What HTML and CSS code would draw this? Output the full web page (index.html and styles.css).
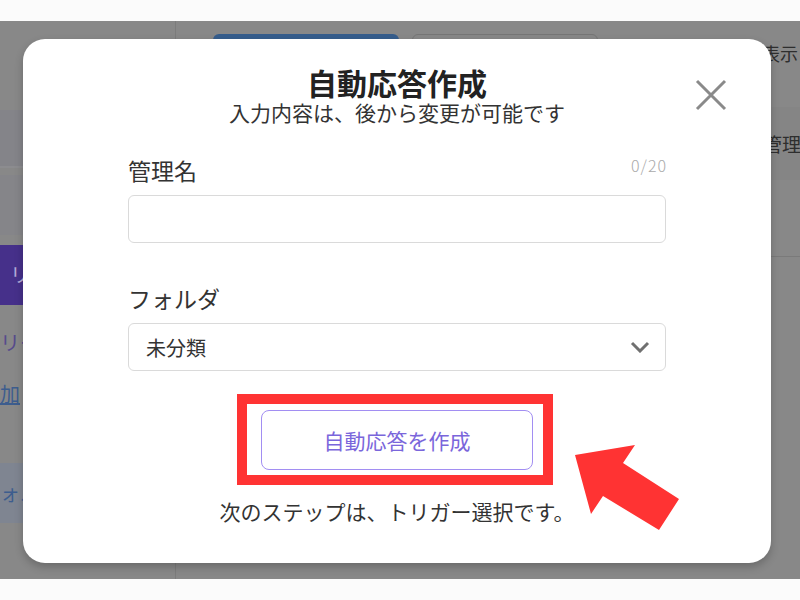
FILE: index.html
```html
<!DOCTYPE html>
<html lang="ja">
<head>
<meta charset="utf-8">
<title>自動応答作成</title>
<link rel="stylesheet" href="styles.css">
</head>
<body>
<div class="topbar"></div>
<div class="screen">
  <aside class="sidebar">
    <div class="side-head"></div>
    <div class="side-band"></div>
    <div class="side-band second"></div>
    <div class="side-item active">リッチメニュー</div>
    <div class="side-text">リーチ数</div>
    <a class="side-link">加</a>
    <div class="side-folder">ォルダ</div>
  </aside>
  <main class="main">
    <div class="toolbar">
      <span class="tb-btn primary"></span>
      <span class="tb-btn outline"></span>
      <span class="tb-label">非表示</span>
    </div>
    <div class="table-head"><span class="th">管理</span></div>
    <div class="table-row"></div>
  </main>

  <div class="modal" role="dialog">
    <div class="modal-header">
      <div class="titles">
        <h1 class="title">自動応答作成</h1>
        <p class="subtitle">入力内容は、後から変更が可能です</p>
      </div>
      <button class="close" aria-label="閉じる">
        <svg width="32" height="32" viewBox="0 0 32 32"><path d="M2 2 L30 30 M30 2 L2 30" stroke="#8a8a8a" stroke-width="3" stroke-linecap="butt" fill="none"/></svg>
      </button>
    </div>
    <div class="modal-body">
      <div class="field">
        <div class="label-row"><span class="label">管理名</span><span class="counter">0/20</span></div>
        <div class="input"></div>
      </div>
      <div class="field">
        <div class="label-row"><span class="label">フォルダ</span></div>
        <div class="select">
          <span>未分類</span>
          <svg width="20" height="12" viewBox="0 0 20 12"><path d="M2 2 L10 10 L18 2" stroke="#707070" stroke-width="3" fill="none"/></svg>
        </div>
      </div>
      <div class="highlight">
        <button class="create">自動応答を作成</button>
      </div>
      <p class="note">次のステップは、トリガー選択です。</p>
    </div>
    <svg class="arrow" width="120" height="100" viewBox="0 0 120 100"><polygon points="0,12 60,2 48,20 104,56 84,87 28,53 16,71" fill="#ff3333"/></svg>
  </div>
</div>
<div class="bottombar"></div>
</body>
</html>
```

FILE: styles.css
```css
* { box-sizing: border-box; }
html, body { margin: 0; padding: 0; }
body {
  width: 800px;
  height: 600px;
  overflow: hidden;
  background: #fbfbfb;
  font-family: "Noto Sans CJK JP", "Noto Sans", sans-serif;
  color: #333;
}
.topbar { height: 21px; background: #fbfbfb; }
.bottombar { height: 21px; background: #fbfbfb; }
.screen {
  position: relative;
  height: 558px;
  display: flex;
  background: #888888;
  overflow: hidden;
}
.sidebar {
  width: 176px;
  flex: none;
  border-right: 1px solid #7c7c7c;
  display: flex;
  flex-direction: column;
  white-space: nowrap;
  overflow: hidden;
}
.side-head { height: 89px; }
.side-band { height: 58px; background: #848489; border-bottom: 2px solid #8c8c8f; }
.side-band.second { height: 60px; margin-top: 7px; background: #858589; border: none; }
.side-item {
  height: 60px;
  margin-top: 10px;
  background: #46308a;
  color: #b4aad8;
  font-size: 20px;
  line-height: 60px;
  padding-left: 10px;
}
.side-text {
  margin-top: 26px;
  font-size: 20px;
  line-height: 24px;
  color: #574b8c;
}
.side-link {
  margin-top: 27px;
  font-size: 20px;
  line-height: 24px;
  color: #3d5d8e;
  text-decoration: underline;
}
.side-folder {
  margin-top: 57px;
  height: 60px;
  background: #7f8591;
  color: #3d5d8e;
  font-size: 20px;
  line-height: 60px;
}
.main {
  flex: 1;
  display: flex;
  flex-direction: column;
  white-space: nowrap;
  overflow: hidden;
}
.toolbar {
  display: flex;
  align-items: flex-start;
  gap: 13px;
  padding: 13px 0 0 37px;
  height: 86px;
}
.tb-btn { width: 186px; height: 38px; border-radius: 6px; }
.tb-btn.primary { background: #365d8c; }
.tb-btn.outline { border: 1px solid #767676; }
.tb-label {
  margin-left: 133px;
  font-size: 18px;
  line-height: 38px;
  color: #2e2e2e;
}
.table-head {
  height: 73px;
  background: #858585;
  padding-left: 587px;
  display: flex;
  align-items: center;
}
.th { font-size: 19px; color: #2e2e2e; }
.table-row { height: 77px; border-bottom: 1px solid #7a7a7a; }

/* modal */
.modal {
  position: absolute;
  left: 23px;
  top: 18px;
  width: 748px;
  height: 524px;
  background: #fff;
  border-radius: 22px;
  box-shadow: 0 4px 8px rgba(0,0,0,0.22);
  padding-top: 25px;
}
.modal-header {
  display: grid;
  grid-template-columns: 1fr auto 1fr;
  padding: 0 44px;
}
.titles { grid-column: 2; text-align: center; }
.title {
  margin: 0;
  font-size: 30px;
  line-height: 36px;
  font-weight: 700;
  color: #222;
}
.subtitle {
  margin: 0;
  font-size: 21px;
  line-height: 24px;
  color: #333;
}
.close {
  grid-column: 3;
  justify-self: end;
  margin-top: 15px;
  width: 32px;
  height: 32px;
  padding: 0;
  border: none;
  background: none;
}
.close svg { display: block; }
.modal-body {
  padding: 31px 105px 0;
  display: flex;
  flex-direction: column;
}
.field { display: flex; flex-direction: column; }
.field + .field { margin-top: 40px; }
.label-row {
  display: flex;
  justify-content: space-between;
  align-items: flex-start;
  height: 30px;
  margin-bottom: 10px;
}
.label { font-size: 23px; line-height: 30px; color: #333; }
.counter {
  font-size: 16px;
  line-height: 20px;
  letter-spacing: 1px;
  margin-right: -1px;
  color: #aaa;
  font-weight: 300;
}
.input, .select {
  height: 48px;
  border: 1px solid #dadada;
  border-radius: 6px;
  background: #fff;
}
.select {
  display: flex;
  align-items: center;
  justify-content: space-between;
  padding: 0 15px 0 17px;
  font-size: 20px;
  color: #333;
}
.select svg { display: block; }
.highlight {
  align-self: flex-start;
  margin: 23px 0 0 109px;
  border: 10px solid #ff3333;
  padding: 6px 10px 5px 14px;
}
.create {
  display: block;
  width: 272px;
  height: 60px;
  border: 1.5px solid #a28ef2;
  border-radius: 8px;
  background: #fff;
  color: #7a66db;
  font-family: inherit;
  font-size: 21px;
}
.note {
  margin: 14px 0 0;
  text-align: center;
  font-size: 21px;
  line-height: 24px;
  color: #333;
}
.arrow {
  position: absolute;
  left: 552px;
  top: 404px;
}
```
